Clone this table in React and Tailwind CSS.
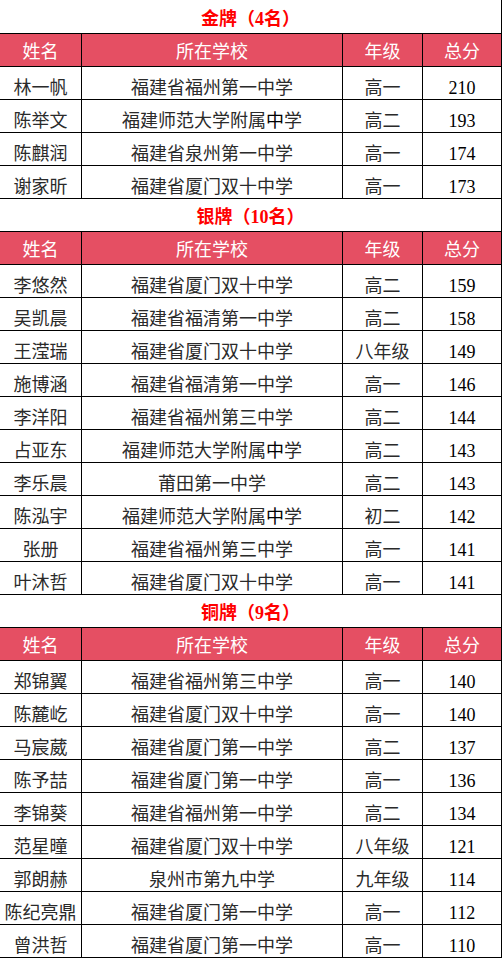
import React from "react";

const sections = [
  {
    title: "金牌（4名）",
    rows: [
      ["林一帆", "福建省福州第一中学", "高一", "210"],
      ["陈举文", "福建师范大学附属中学", "高二", "193"],
      ["陈麒润", "福建省泉州第一中学", "高一", "174"],
      ["谢家昕", "福建省厦门双十中学", "高一", "173"],
    ],
  },
  {
    title: "银牌（10名）",
    rows: [
      ["李悠然", "福建省厦门双十中学", "高二", "159"],
      ["吴凯晨", "福建省福清第一中学", "高二", "158"],
      ["王滢瑞", "福建省厦门双十中学", "八年级", "149"],
      ["施博涵", "福建省福清第一中学", "高一", "146"],
      ["李洋阳", "福建省福州第三中学", "高二", "144"],
      ["占亚东", "福建师范大学附属中学", "高二", "143"],
      ["李乐晨", "莆田第一中学", "高二", "143"],
      ["陈泓宇", "福建师范大学附属中学", "初二", "142"],
      ["张册", "福建省福州第三中学", "高一", "141"],
      ["叶沐哲", "福建省厦门双十中学", "高一", "141"],
    ],
  },
  {
    title: "铜牌（9名）",
    rows: [
      ["郑锦翼", "福建省福州第三中学", "高一", "140"],
      ["陈麓屹", "福建省厦门双十中学", "高一", "140"],
      ["马宸葳", "福建省厦门第一中学", "高二", "137"],
      ["陈予喆", "福建省厦门第一中学", "高一", "136"],
      ["李锦葵", "福建省福州第一中学", "高二", "134"],
      ["范星曈", "福建省厦门双十中学", "八年级", "121"],
      ["郭朗赫", "泉州市第九中学", "九年级", "114"],
      ["陈纪亮鼎", "福建省厦门第一中学", "高一", "112"],
      ["曾洪哲", "福建省厦门第一中学", "高一", "110"],
    ],
  },
];

const headers = ["姓名", "所在学校", "年级", "总分"];
const grid = "grid grid-cols-[82px_261px_80px_79px]";

// 附属中学 prints its 中 a shade darker than the rest
const School = ({ name }) => {
  if (!name.startsWith("福建师范大学附属")) return name;
  return (
    <>
      福建师范大学附属<span className="text-black">中</span>学
    </>
  );
};

const TitleRow = ({ title, first }) => (
  <div
    className={`${
      first ? "h-[34px]" : "h-[33px]"
    } flex items-center justify-center pt-[4px] border-b border-r border-black bg-white text-[18px] font-bold text-[#ff0000]`}
  >
    {title}
  </div>
);

const HeaderRow = () => (
  <div className={`${grid} h-[33px] border-b border-black bg-[#e54f63] text-white`}>
    {headers.map((h) => (
      <div
        key={h}
        className="flex items-center justify-center pt-[3px] border-r border-black text-[18px]"
      >
        {h}
      </div>
    ))}
  </div>
);

const DataRow = ({ row }) => (
  <div className={`${grid} h-[33px] border-b border-black bg-white text-[#2a2a2a]`}>
    <div className="flex items-center justify-center pt-[10px] border-r border-black text-[18px] whitespace-nowrap">
      {row[0]}
    </div>
    <div className="flex items-center justify-center pt-[10px] border-r border-black text-[18px] whitespace-nowrap">
      <School name={row[1]} />
    </div>
    <div className="flex items-center justify-center pt-[10px] border-r border-black text-[18px] whitespace-nowrap">
      {row[2]}
    </div>
    <div className="flex items-center justify-center pt-[10px] border-r border-black text-[18px] text-black">
      {row[3]}
    </div>
  </div>
);

export default function App() {
  return (
    <div
      className="w-[502px] h-[958px] bg-white overflow-hidden leading-none"
      style={{ fontFamily: '"Liberation Serif", "Noto Sans CJK SC", serif' }}
    >
      {sections.map((s, i) => (
        <div key={s.title}>
          <TitleRow title={s.title} first={i === 0} />
          <HeaderRow />
          {s.rows.map((r) => (
            <DataRow key={r[0]} row={r} />
          ))}
        </div>
      ))}
    </div>
  );
}
